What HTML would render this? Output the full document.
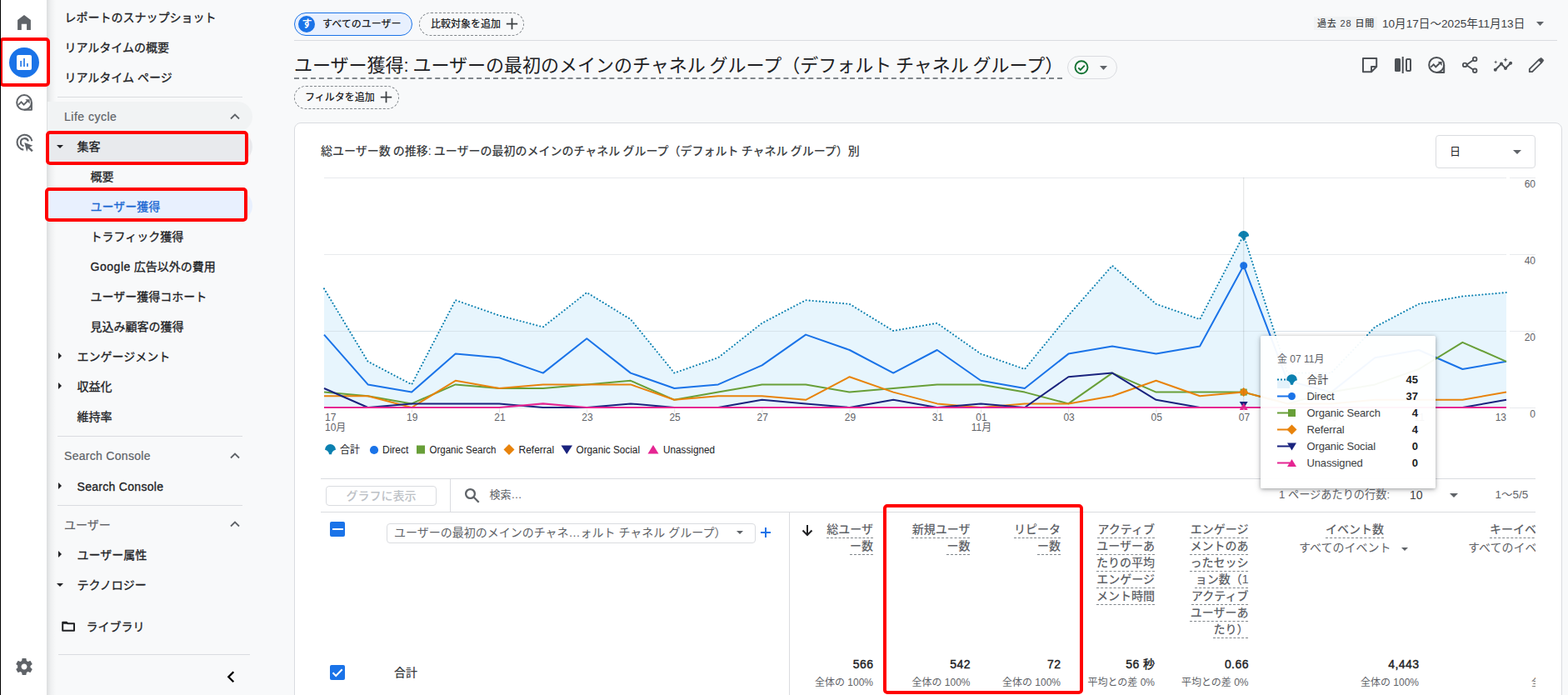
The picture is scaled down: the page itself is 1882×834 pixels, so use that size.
<!DOCTYPE html>
<html lang="ja">
<head>
<meta charset="utf-8">
<title>ユーザー獲得</title>
<style>
*{box-sizing:border-box;margin:0;padding:0}
html,body{width:1882px;height:834px;overflow:hidden;background:#f8f9fa}
body{position:relative;font-family:"Liberation Sans","Noto Sans CJK JP",sans-serif;color:#202124;font-size:14px}
.abs{position:absolute}
.t{position:absolute;white-space:nowrap;line-height:1}
svg{position:absolute;overflow:visible}
/* rail */
#edge{left:0;top:0;width:1px;height:834px;background:#000}
#rail{left:1px;top:0;width:55px;height:834px;background:#fff}
#railshadow{left:56px;top:0;width:11px;height:834px;background:linear-gradient(90deg,rgba(60,64,67,.15),rgba(60,64,67,.05) 45%,rgba(60,64,67,0))}
/* sidebar */
.nav{font-size:14px;color:#202124;font-weight:400;-webkit-text-stroke:.3px #202124;transform:translate(-.5px,.5px)}
.sec{font-size:14px;color:#5f6368;font-weight:400;-webkit-text-stroke:.22px #5f6368}
.hr{position:absolute;height:1px;background:#dadce0}
.redbox{position:absolute;border:4px solid #f00;border-radius:5px}
/* main */
.chip{position:absolute;border-radius:16px;font-size:12.5px;color:#202124}
.gl{stroke:#e8eaed;stroke-width:1}
.ax{font-size:12px;fill:#5f6368;font-family:"Liberation Sans","Noto Sans CJK JP",sans-serif}
.lg{font-size:12px;fill:#202124;font-family:"Liberation Sans","Noto Sans CJK JP",sans-serif}
.th{position:absolute;font-size:14px;line-height:20px;color:#5f6368;text-align:right;white-space:nowrap;font-weight:500}
.th span{text-decoration:underline dashed #80868b 1px;text-underline-offset:4.600px}
.tv{position:absolute;font-size:14px;font-weight:400;-webkit-text-stroke:.42px #202124;letter-spacing:.45px;margin-left:.45px;color:#202124;text-align:right;white-space:nowrap;line-height:1}
.ts{position:absolute;font-size:12px;color:#5f6368;text-align:right;white-space:nowrap;line-height:1}
</style>
</head>
<body>
<!-- ICON RAIL -->
<div class="abs" id="rail"></div>
<div class="abs" id="railshadow"></div>

<!-- rail icons -->
<svg style="left:0;top:0" width="60" height="50" viewBox="0 0 60 50"><path d="M21.100 35.900V24.100L29 18l7.900 6.100V35.900h-4.800v-7.200h-6.300v7.200z" fill="#5f6368"/></svg>
<div class="abs" style="left:11px;top:57px;width:36px;height:36px;border-radius:50%;background:#1a73e8"></div>
<svg style="left:20px;top:66px" width="18" height="18" viewBox="0 0 18 18"><rect x="0" y="0" width="18" height="18" rx="2" fill="#fff"/><rect x="4.300" y="7" width="1.600" height="7" fill="#1a73e8"/><rect x="8.200" y="4" width="1.600" height="10" fill="#1a73e8"/><rect x="12.100" y="10" width="1.600" height="4" fill="#1a73e8"/></svg>
<svg style="left:0;top:0" width="60" height="200" viewBox="0 0 60 200" fill="none" stroke="#5f6368" stroke-width="2"><circle cx="29.050" cy="122.950" r="8.850"/><path d="M37.900 122.950v8.850h-8.850" stroke-linejoin="round"/><path d="M22.100 125.800l3.400-3.400 3.100 3.200 4.400-4.300" stroke-width="1.900"/><path d="M30.400 119.300h5.200v5.200z" fill="#5f6368" stroke="none"/></svg>
<svg style="left:0;top:0" width="60" height="200" viewBox="0 0 60 200" fill="none" stroke="#5f6368" stroke-width="2.100"><path d="M38.400 169.200A9 9 0 1 0 28.300 179.700"/><path d="M33.900 169.600A4.600 4.600 0 1 0 28.600 175.300"/><path d="M29.300 170.900l10 3.800-3.800 1.700 4.200 4.200-1.700 1.700-4.200-4.200-1.700 3.800z" fill="#5f6368" stroke="none"/></svg>
<svg style="left:17px;top:787.800px" width="24" height="24" viewBox="0 0 24 24"><path fill="#5f6368" d="M19.430 12.980c.040-.32.070-.640.070-.980s-.030-.660-.070-.980l2.110-1.650c.190-.15.240-.42.120-.640l-2-3.460c-.12-.22-.39-.3-.61-.22l-2.490 1c-.52-.4-1.080-.73-1.690-.98l-.38-2.650C14.460 2.180 14.250 2 14 2h-4c-.25 0-.46.180-.49.420l-.38 2.650c-.61.250-1.170.59-1.690.98l-2.490-1c-.23-.09-.49 0-.61.220l-2 3.460c-.13.220-.07.490.12.640l2.110 1.650c-.4.320-.7.650-.7.980s.3.660.7.980l-2.110 1.650c-.19.150-.24.420-.12.640l2 3.460c.12.220.39.300.61.220l2.490-1c.52.400 1.080.73 1.690.98l.38 2.650c.3.240.24.420.49.420h4c.25 0 .46-.18.490-.42l.38-2.650c.61-.25 1.170-.59 1.690-.98l2.490 1c.23.090.49 0 .61-.22l2-3.460c.12-.22.070-.49-.12-.640l-2.110-1.650zM12 15.500c-1.930 0-3.500-1.570-3.500-3.500s1.570-3.500 3.500-3.500 3.500 1.570 3.500 3.500-1.570 3.500-3.500 3.500z"/></svg>
<div class="redbox" style="left:-1px;top:45px;width:61px;height:59px"></div>
<div class="abs" id="edge"></div>

<!-- SIDEBAR -->
<div id="sidebar">
<div class="t nav" style="left:78px;top:13px">レポートのスナップショット</div>
<div class="t nav" style="left:78px;top:49px">リアルタイムの概要</div>
<div class="t nav" style="left:78px;top:85px">リアルタイム ページ</div>
<div class="hr" style="left:69px;top:116px;width:222px"></div>
<div class="abs" style="left:57px;top:122px;width:246px;height:36px;background:#f1f3f4;border-radius:0 18px 18px 0"></div>
<div class="t sec" style="left:77px;top:132.700px;letter-spacing:.5px">Life cycle</div>
<svg style="left:276px;top:136px" width="12" height="8" viewBox="0 0 12 8"><path d="M1 6.500l5-5 5 5" fill="none" stroke="#5f6368" stroke-width="1.800"/></svg>
<div class="abs" style="left:57px;top:158px;width:246px;height:36px;background:#e8eaed;border-radius:0 18px 18px 0"></div>
<svg style="left:68px;top:174px" width="8" height="4" viewBox="0 0 8 4"><path d="M0 0h8L4 4z" fill="#202124"/></svg>
<div class="t nav" style="left:93px;top:168px">集客</div>
<div class="t nav" style="left:109px;top:204px">概要</div>
<div class="abs" style="left:57px;top:229px;width:246px;height:36px;background:#e8f0fe;border-radius:0 18px 18px 0"></div>
<div class="t nav" style="left:109px;top:240px;color:#1967d2;-webkit-text-stroke-color:#1967d2">ユーザー獲得</div>
<div class="t nav" style="left:109px;top:276px">トラフィック獲得</div>
<div class="t nav" style="left:109px;top:312px"><span style="letter-spacing:.55px">Google</span> 広告以外の費用</div>
<div class="t nav" style="left:109px;top:348px">ユーザー獲得コホート</div>
<div class="t nav" style="left:109px;top:384px">見込み顧客の獲得</div>
<svg style="left:70px;top:423px" width="4" height="8" viewBox="0 0 4 8"><path d="M0 0v8l4-4z" fill="#202124"/></svg>
<div class="t nav" style="left:93px;top:420px">エンゲージメント</div>
<svg style="left:70px;top:459px" width="4" height="8" viewBox="0 0 4 8"><path d="M0 0v8l4-4z" fill="#202124"/></svg>
<div class="t nav" style="left:93px;top:456px">収益化</div>
<div class="t nav" style="left:93px;top:492px">維持率</div>
<div class="hr" style="left:69px;top:523px;width:222px"></div>
<div class="t sec" style="left:77px;top:540.300px;letter-spacing:.3px">Search Console</div>
<svg style="left:276px;top:543px" width="12" height="8" viewBox="0 0 12 8"><path d="M1 6.500l5-5 5 5" fill="none" stroke="#5f6368" stroke-width="1.800"/></svg>
<svg style="left:70px;top:579px" width="4" height="8" viewBox="0 0 4 8"><path d="M0 0v8l4-4z" fill="#202124"/></svg>
<div class="t nav" style="left:93px;top:576px;letter-spacing:.3px">Search Console</div>
<div class="hr" style="left:69px;top:606px;width:222px"></div>
<div class="t sec" style="left:77px;top:622.800px">ユーザー</div>
<svg style="left:276px;top:625px" width="12" height="8" viewBox="0 0 12 8"><path d="M1 6.500l5-5 5 5" fill="none" stroke="#5f6368" stroke-width="1.800"/></svg>
<svg style="left:70px;top:661px" width="4" height="8" viewBox="0 0 4 8"><path d="M0 0v8l4-4z" fill="#202124"/></svg>
<div class="t nav" style="left:93px;top:658px">ユーザー属性</div>
<svg style="left:68px;top:700px" width="8" height="4" viewBox="0 0 8 4"><path d="M0 0h8L4 4z" fill="#202124"/></svg>
<div class="t nav" style="left:93px;top:694px">テクノロジー</div>
<svg style="left:74px;top:745px" width="17" height="14" viewBox="0 0 17 14"><path d="M1.200 1.800h4.600l1.500 1.500H15V11.800H1.200z" fill="none" stroke="#202124" stroke-width="2" stroke-linejoin="round"/><path d="M1 2.800H7" stroke="#202124" stroke-width="2"/></svg>
<div class="t nav" style="left:104px;top:744px">ライブラリ</div>
<div class="hr" style="left:70px;top:785px;width:230px"></div>
<svg style="left:272px;top:805px" width="10" height="14" viewBox="0 0 10 14"><path d="M8.300 1.200L2.300 7.200l6 6" fill="none" stroke="#000" stroke-width="2.300"/></svg>
<div class="redbox" style="left:55px;top:157px;width:243px;height:41px"></div>
<div class="redbox" style="left:54px;top:225px;width:243px;height:41px"></div>
</div>

<!-- MAIN -->
<div id="main">
<!-- header chips -->
<div class="chip" style="left:353px;top:15px;width:142px;height:28px;background:#e8f0fe;border:1.500px solid #1a73e8"></div>
<div class="abs" style="left:358px;top:18.500px;width:20px;height:20px;border-radius:50%;background:#1a73e8"></div>
<div class="t" style="left:362.500px;top:23px;font-size:12px;color:#fff;font-weight:700">す</div>
<div class="t" style="left:387px;top:23px;font-size:12px;color:#202124;font-weight:500">すべてのユーザー</div>
<div class="chip" style="left:503px;top:15px;width:126px;height:28px;border:1px dashed #80868b"></div>
<div class="t" style="left:517px;top:23px;font-size:12px;color:#202124;font-weight:500">比較対象を追加</div>
<svg style="left:607px;top:21px" width="15" height="15" viewBox="0 0 15 15"><path d="M7.500 0.800v13.400M0.800 7.500h13.400" stroke="#3c4043" stroke-width="1.750"/></svg>
<div class="hr" style="left:353px;top:48px;width:1516px"></div>
<!-- date range -->
<div class="abs" style="left:1577px;top:20px;width:76px;height:16px;background:#f1f3f4"></div>
<div class="t" style="left:1581px;top:22.500px;font-size:11px;color:#3c4043;font-weight:500;letter-spacing:.85px">過去 28 日間</div>
<div class="t" style="left:1659px;top:21.500px;font-size:13.600px;color:#3c4043;font-weight:400">10月17日～2025年11月13日</div>
<svg style="left:1844px;top:26px" width="9" height="5" viewBox="0 0 9 5"><path d="M0 0h9L4.500 5z" fill="#5f6368"/></svg>
<!-- title -->
<div class="t" id="title" style="left:353px;top:67.500px;font-size:22px;color:#202124;font-weight:400;word-spacing:-1.350px">ユーザー獲得: ユーザーの最初のメインのチャネル グループ（デフォルト チャネル グループ）</div>
<div class="abs" style="left:353px;top:93px;width:922px;height:0;border-top:2px dashed #80868b"></div>
<div class="abs" style="left:1281px;top:67px;width:60px;height:28px;border:1px solid #dadce0;border-radius:14px"></div>
<svg style="left:1289px;top:72px" width="18" height="18" viewBox="0 0 18 18" fill="none" stroke="#137333" stroke-width="1.900"><circle cx="9" cy="8.800" r="7.500"/><path d="M5.300 9.300l2.500 2.500 5-5.200"/></svg>
<svg style="left:1319.500px;top:79px" width="9" height="5" viewBox="0 0 9 5"><path d="M0 0h9L4.500 5z" fill="#5f6368"/></svg>
<!-- toolbar icons -->
<svg style="left:0;top:0" width="1882" height="100" viewBox="0 0 1882 100" fill="none" stroke="#4d5156" stroke-width="2">
<path d="M1636 70h16.200v10l-6.200 6.200h-10z" stroke-linejoin="round"/><path d="M1652.200 80h-6.200v6.200" stroke-linejoin="round"/>
<rect x="1674" y="70" width="7" height="16" rx="1.500" fill="#4d5156" stroke="none"/><rect x="1682.700" y="68" width="2" height="20" fill="#4d5156" stroke="none"/><rect x="1688" y="71" width="5" height="14" rx="1"/>
<circle cx="1724.200" cy="77.900" r="9"/><path d="M1733.200 77.900v9h-9" stroke-linejoin="round"/><path d="M1717.300 80.600l3.400-3.300 2.600 3 4.800-4.600" stroke-width="1.900"/><path d="M1725.600 73.900h5v5z" fill="#4d5156" stroke="none"/>
<path d="M1768 72.200l-8 5.700 8 5.700" stroke-width="1.900"/><circle cx="1770.200" cy="71" r="2.300" fill="#f8f9fa" stroke-width="1.800"/><circle cx="1758.200" cy="77.900" r="2.300" fill="#f8f9fa" stroke-width="1.800"/><circle cx="1770.200" cy="84.800" r="2.300" fill="#f8f9fa" stroke-width="1.800"/>
<path d="M1794.800 83.800l7.200-7.200 5 5.300 6.100-6.200"/><circle cx="1794.800" cy="83.800" r="2" fill="#4d5156" stroke="none"/><circle cx="1802" cy="76.600" r="2" fill="#4d5156" stroke="none"/><circle cx="1807" cy="81.900" r="2" fill="#4d5156" stroke="none"/><circle cx="1813.100" cy="75.700" r="2" fill="#4d5156" stroke="none"/>
<path d="M1795.200 72.300l.6 1.600 1.600.6-1.600.6-.6 1.600-.6-1.600-1.600-.6 1.600-.6zM1807 69l.8 1.900 1.900.8-1.900.8-.8 1.900-.8-1.900-1.900-.8 1.900-.8z" fill="#4d5156" stroke="none"/>
<path d="M1835.800 86.200v-3.300l11.600-11.600 3.300 3.300-11.600 11.600z" stroke-linejoin="round" stroke-width="1.800"/><path d="M1846.600 72.100l2.300-2.300a1 1 0 0 1 1.400 0l2 2a1 1 0 0 1 0 1.400l-2.300 2.300z" fill="#4d5156" stroke-width="1"/>
</svg>
<!-- filter chip -->
<div class="chip" style="left:353px;top:103px;width:126px;height:28px;border:1px dashed #80868b"></div>
<div class="t" style="left:366px;top:111px;font-size:12px;color:#202124;font-weight:500">フィルタを追加</div>
<svg style="left:456px;top:109px" width="15" height="15" viewBox="0 0 15 15"><path d="M7.500 0.800v13.400M0.800 7.500h13.400" stroke="#3c4043" stroke-width="1.750"/></svg>
<!-- card -->
<div class="abs" id="card" style="left:353px;top:147px;width:1522px;height:700px;background:#fff;border:1px solid #dadce0;border-radius:8px"></div>
<div class="t" style="left:385px;top:174px;font-size:14px;color:#3c4043;font-weight:500;word-spacing:-.8px">総ユーザー数 の推移: ユーザーの最初のメインのチャネル グループ（デフォルト チャネル グループ）別</div>
<div class="abs" style="left:1723px;top:162px;width:120px;height:40px;border:1px solid #dadce0;border-radius:4px;background:#fff"></div>
<div class="t" style="left:1740px;top:175px;font-size:13px;color:#202124">日</div>
<svg style="left:1816px;top:180px" width="10" height="5" viewBox="0 0 10 5"><path d="M0 0h10L5 5z" fill="#5f6368"/></svg>
<!--CHART-->
<svg id="chart" style="left:0;top:0" width="1882" height="834" viewBox="0 0 1882 834">
<path class="gl" d="M389 213.5H1808M1812 213.5H1843"/>
<path class="gl" d="M389 305.5H1808M1812 305.5H1843"/>
<path class="gl" d="M389 397.5H1808M1812 397.5H1843"/>
<path class="gl" d="M389 489.5H1808M1812 489.5H1843"/>
<polygon points="389.0,489.0 389.0,346.4 441.6,433.8 494.1,461.4 546.7,360.2 599.2,378.6 651.8,392.4 704.3,351.0 756.9,383.2 809.4,447.6 862.0,429.2 914.6,387.8 967.1,360.2 1019.7,364.8 1072.2,397.0 1124.8,387.8 1177.3,424.6 1229.9,443.0 1282.4,378.6 1335.0,318.8 1387.6,364.8 1440.1,383.2 1492.7,282.0 1545.2,447.6 1597.8,447.6 1650.3,392.4 1702.9,364.8 1755.4,355.6 1808.0,351.0 1808.0,489.0" fill="#e3f3fd" fill-opacity=".85"/>
<path d="M389 397.5H1808" stroke="#d5e0e8" stroke-width="1" opacity=".8"/>
<polyline points="389.0,346.4 441.6,433.8 494.1,461.4 546.7,360.2 599.2,378.6 651.8,392.4 704.3,351.0 756.9,383.2 809.4,447.6 862.0,429.2 914.6,387.8 967.1,360.2 1019.7,364.8 1072.2,397.0 1124.8,387.8 1177.3,424.6 1229.9,443.0 1282.4,378.6 1335.0,318.8 1387.6,364.8 1440.1,383.2 1492.7,282.0 1545.2,447.6 1597.8,447.6 1650.3,392.4 1702.9,364.8 1755.4,355.6 1808.0,351.0" fill="none" stroke="#0b80b0" stroke-width="2.100" stroke-linecap="round" stroke-dasharray="0.010 4.050"/>
<polyline points="389.0,401.6 441.6,461.4 494.1,470.6 546.7,424.6 599.2,429.2 651.8,447.6 704.3,406.2 756.9,447.6 809.4,466.0 862.0,461.4 914.6,438.4 967.1,401.6 1019.7,420.0 1072.2,447.6 1124.8,420.0 1177.3,456.8 1229.9,466.0 1282.4,424.6 1335.0,415.4 1387.6,424.6 1440.1,415.4 1492.7,318.8 1545.2,456.8 1597.8,470.6 1650.3,429.2 1702.9,420.0 1755.4,443.0 1808.0,433.8" fill="none" stroke="#1a73e8" stroke-width="2" stroke-linejoin="round"/>
<polyline points="389.0,470.6 441.6,475.2 494.1,484.4 546.7,461.4 599.2,466.0 651.8,466.0 704.3,461.4 756.9,456.8 809.4,479.8 862.0,470.6 914.6,461.4 967.1,461.4 1019.7,470.6 1072.2,466.0 1124.8,461.4 1177.3,461.4 1229.9,470.6 1282.4,484.4 1335.0,447.6 1387.6,470.6 1440.1,470.6 1492.7,470.6 1545.2,484.4 1597.8,470.6 1650.3,461.4 1702.9,443.0 1755.4,410.8 1808.0,433.8" fill="none" stroke="#689f38" stroke-width="2" stroke-linejoin="round"/>
<polyline points="389.0,475.2 441.6,475.2 494.1,489.0 546.7,456.8 599.2,466.0 651.8,461.4 704.3,461.4 756.9,461.4 809.4,479.8 862.0,475.2 914.6,475.2 967.1,479.8 1019.7,452.2 1072.2,470.6 1124.8,484.4 1177.3,489.0 1229.9,484.4 1282.4,484.4 1335.0,475.2 1387.6,456.8 1440.1,475.2 1492.7,470.6 1545.2,484.4 1597.8,484.4 1650.3,479.8 1702.9,479.8 1755.4,479.8 1808.0,470.6" fill="none" stroke="#e8830c" stroke-width="2" stroke-linejoin="round"/>
<polyline points="389.0,466.0 441.6,489.0 494.1,484.4 546.7,484.4 599.2,484.4 651.8,489.0 704.3,489.0 756.9,484.4 809.4,489.0 862.0,489.0 914.6,479.8 967.1,484.4 1019.7,489.0 1072.2,479.8 1124.8,489.0 1177.3,484.4 1229.9,489.0 1282.4,452.2 1335.0,447.6 1387.6,479.8 1440.1,489.0 1492.7,489.0 1545.2,489.0 1597.8,489.0 1650.3,489.0 1702.9,489.0 1755.4,489.0 1808.0,479.8" fill="none" stroke="#1a237e" stroke-width="2" stroke-linejoin="round"/>
<polyline points="389.0,489.0 441.6,489.0 494.1,489.0 546.7,489.0 599.2,489.0 651.8,484.4 704.3,489.0 756.9,489.0 809.4,489.0 862.0,489.0 914.6,489.0 967.1,489.0 1019.7,489.0 1072.2,489.0 1124.8,489.0 1177.3,489.0 1229.9,489.0 1282.4,489.0 1335.0,489.0 1387.6,489.0 1440.1,489.0 1492.7,489.0 1545.2,489.0 1597.8,489.0 1650.3,489.0 1702.9,489.0 1755.4,489.0 1808.0,489.0" fill="none" stroke="#e52592" stroke-width="2.200"/>
<path d="M1486.2 283.3A6.500 6.2 0 0 1 1499.2 283.3Q1493.7 284.6 1493.4 288.90000000000003H1492.0Q1491.7 284.6 1486.2 283.3Z" fill="#0b80b0"/>
<circle cx="1492.7" cy="318.8" r="4.500" fill="#1a73e8"/>
<rect x="1488.7" y="466.6" width="8" height="8" fill="#689f38"/>
<path d="M1492.7 465.1l5.500 5.500-5.500 5.500-5.500-5.500z" fill="#e8830c"/>
<path d="M1487.7 482.0h10l-5 8z" fill="#1a237e"/>
<path d="M1487.7 492.0h10l-5-8.500z" fill="#e52592"/>
<path d="M1492.7 213V489" stroke="rgba(60,64,67,.14)" stroke-width="1.100"/>
<text class="ax" x="1843" y="225" text-anchor="end">60</text>
<text class="ax" x="1843" y="317" text-anchor="end">40</text>
<text class="ax" x="1843" y="409" text-anchor="end">20</text>
<text class="ax" x="1843" y="501" text-anchor="end">0</text>
<text class="ax" x="390" y="505">17</text>
<path d="M494.40000000000003 490.500V495" stroke="#e0e0e0" stroke-width="1"/>
<text class="ax" x="494.8" y="505" text-anchor="middle">19</text>
<path d="M599.5 490.500V495" stroke="#e0e0e0" stroke-width="1"/>
<text class="ax" x="599.9000000000001" y="505" text-anchor="middle">21</text>
<path d="M704.5999999999999 490.500V495" stroke="#e0e0e0" stroke-width="1"/>
<text class="ax" x="705.0" y="505" text-anchor="middle">23</text>
<path d="M809.6999999999999 490.500V495" stroke="#e0e0e0" stroke-width="1"/>
<text class="ax" x="810.1" y="505" text-anchor="middle">25</text>
<path d="M914.9 490.500V495" stroke="#e0e0e0" stroke-width="1"/>
<text class="ax" x="915.3000000000001" y="505" text-anchor="middle">27</text>
<path d="M1020.0 490.500V495" stroke="#e0e0e0" stroke-width="1"/>
<text class="ax" x="1020.4000000000001" y="505" text-anchor="middle">29</text>
<path d="M1125.1 490.500V495" stroke="#e0e0e0" stroke-width="1"/>
<text class="ax" x="1125.5" y="505" text-anchor="middle">31</text>
<path d="M1177.6 490.500V495" stroke="#e0e0e0" stroke-width="1"/>
<text class="ax" x="1178.0" y="505" text-anchor="middle">01</text>
<path d="M1282.7 490.500V495" stroke="#e0e0e0" stroke-width="1"/>
<text class="ax" x="1283.1000000000001" y="505" text-anchor="middle">03</text>
<path d="M1387.8999999999999 490.500V495" stroke="#e0e0e0" stroke-width="1"/>
<text class="ax" x="1388.3" y="505" text-anchor="middle">05</text>
<path d="M1493.0 490.500V495" stroke="#e0e0e0" stroke-width="1"/>
<text class="ax" x="1493.4" y="505" text-anchor="middle">07</text>
<path d="M1598.1 490.500V495" stroke="#e0e0e0" stroke-width="1"/>
<text class="ax" x="1598.5" y="505" text-anchor="middle">09</text>
<path d="M1703.2 490.500V495" stroke="#e0e0e0" stroke-width="1"/>
<text class="ax" x="1703.6000000000001" y="505" text-anchor="middle">11</text>
<text class="ax" x="1808" y="505" text-anchor="end">13</text>
<text class="ax" x="390" y="517">10月</text>
<text class="ax" x="1178.0" y="517" text-anchor="middle">11月</text>
<path d="M390.0 539.8A6.500 6.9 0 0 1 403.0 539.8Q398.3 541.0999999999999 398.0 545.3H395.0Q394.7 541.0999999999999 390.0 539.8Z" fill="#0b80b0"/>
<text class="lg" x="408" y="544">合計</text>
<circle cx="449" cy="540.0" r="5.100" fill="#1a73e8"/>
<text class="lg" x="459" y="544">Direct</text>
<rect x="500" y="534.5" width="10" height="10" fill="#689f38"/>
<text class="lg" x="515.500" y="544" textLength="80" lengthAdjust="spacingAndGlyphs">Organic Search</text>
<path d="M611 533.0l6.500 6.500-6.500 6.500-6.500-6.500z" fill="#e8830c"/>
<text class="lg" x="622.500" y="544">Referral</text>
<path d="M673.500 534.5h13.500l-6.750 10.500z" fill="#1a237e"/>
<text class="lg" x="691.500" y="544" textLength="76.500" lengthAdjust="spacingAndGlyphs">Organic Social</text>
<path d="M777.500 544.5h13l-6.500-10.500z" fill="#e52592"/>
<text class="lg" x="796" y="544" textLength="62" lengthAdjust="spacingAndGlyphs">Unassigned</text>
</svg>
<!--/CHART-->
<!--TABLE-->
<div class="hr" style="left:385px;top:574px;width:1458px"></div>
<div class="hr" style="left:385px;top:614px;width:1458px"></div>
<div class="abs" style="left:540px;top:574px;width:1px;height:40px;background:#dadce0"></div>
<div class="abs" style="left:391px;top:583px;width:133px;height:24px;border:1px solid #dadce0;border-radius:4px"></div>
<div class="t" style="left:391px;width:133px;text-align:center;top:588px;font-size:14px;color:#bdc1c6;font-weight:500">グラフに表示</div>
<svg style="left:557px;top:585px" width="19" height="19" viewBox="0 0 19 19" fill="none" stroke="#5f6368" stroke-width="2.300"><circle cx="7.500" cy="7.500" r="5.400"/><path d="M11.500 11.500l6.200 6.200"/></svg>
<div class="t" style="left:587.500px;top:587px;font-size:13px;color:#5f6368;font-weight:400">検索…</div>
<div class="t" style="left:1535px;top:587px;font-size:13.200px;color:#5f6368">1 ページあたりの行数:</div>
<div class="t" style="left:1692px;top:587px;font-size:14px;color:#3c4043">10</div>
<svg style="left:1740px;top:592px" width="10" height="5" viewBox="0 0 10 5"><path d="M0 0h10L5 5z" fill="#5f6368"/></svg>
<div class="t" style="left:1794.500px;top:587px;font-size:13.500px;color:#5f6368">1～5/5</div>
<div class="abs" style="left:396px;top:626px;width:18px;height:18px;border-radius:2px;background:#1a73e8"></div><div class="abs" style="left:398.500px;top:634px;width:13px;height:2px;background:#fff"></div>
<div class="abs" style="left:464px;top:628px;width:443px;height:24px;border:1px solid #dadce0;border-radius:4px"></div>
<div class="t" style="left:473px;top:631.500px;font-size:14px;color:#5f6368;font-weight:400">ユーザーの最初のメインのチャネ…ォルト チャネル グループ）</div>
<svg style="left:884px;top:637px" width="8" height="4" viewBox="0 0 8 4"><path d="M0 0h8L4 4z" fill="#5f6368"/></svg>
<svg style="left:913px;top:633px" width="12" height="12" viewBox="0 0 12 12"><path d="M6 0v12M0 6h12" stroke="#1a73e8" stroke-width="2"/></svg>
<div class="abs" style="left:947px;top:614px;width:1px;height:230px;background:#dadce0"></div>
<svg style="left:962px;top:629px" width="14" height="15" viewBox="0 0 14 15" fill="none" stroke="#202124" stroke-width="2"><path d="M7 1v12M1.500 7.500L7 13l5.500-5.500"/></svg>
<div class="abs" style="left:948px;top:615px;width:895px;height:219px;overflow:hidden">
<div class="th" style="left:-100px;width:200px;top:10.100000000000023px"><span>総ユーザ</span><br><span>ー数</span></div>
<div class="th" style="left:16.5px;width:200px;top:10.100000000000023px"><span>新規ユーザ</span><br><span>ー数</span></div>
<div class="th" style="left:125px;width:200px;top:10.100000000000023px"><span>リピータ</span><br><span>ー数</span></div>
<div class="th" style="left:238px;width:200px;top:10.100000000000023px"><span>アクティブ</span><br><span>ユーザーあ</span><br><span>たりの平均</span><br><span>エンゲージ</span><br><span>メント時間</span></div>
<div class="th" style="left:350.5px;width:200px;top:10.100000000000023px"><span>エンゲージ</span><br><span>メントのあ</span><br><span>ったセッシ</span><br><span>ョン数（1</span><br><span>アクティブ</span><br><span>ユーザーあ</span><br><span>たり）</span></div>
<div class="th" style="left:578px;width:200px;text-align:center;top:10.100px"><span>イベント数</span></div>
<div class="t" style="left:611px;top:35px;font-size:14px;color:#5f6368">すべてのイベント</div>
<svg style="left:734px;top:42px" width="8" height="4" viewBox="0 0 8 4"><path d="M0 0h8L4 4z" fill="#5f6368"/></svg>
<div class="th" style="left:840px;text-align:left;top:10.100px"><span>キーイベント</span></div>
<div class="t" style="left:814px;top:35px;font-size:14px;color:#5f6368">すべてのイベント</div>
<div class="tv" style="left:-50px;width:150px;top:175px">566</div><div class="ts" style="left:-50px;width:150px;top:197.5px">全体の 100%</div>
<div class="tv" style="left:66.5px;width:150px;top:175px">542</div><div class="ts" style="left:66.5px;width:150px;top:197.5px">全体の 100%</div>
<div class="tv" style="left:175px;width:150px;top:175px">72</div><div class="ts" style="left:175px;width:150px;top:197.5px">全体の 100%</div>
<div class="tv" style="left:288px;width:150px;top:175px">56 秒</div><div class="ts" style="left:288px;width:150px;top:197.5px">平均との差 0%</div>
<div class="tv" style="left:400.5px;width:150px;top:175px">0.66</div><div class="ts" style="left:400.5px;width:150px;top:197.5px">平均との差 0%</div>
<div class="tv" style="left:605px;width:150px;top:175px">4,443</div><div class="ts" style="left:605px;width:150px;top:197.5px">全体の 100%</div>
<div class="ts" style="left:890px;text-align:left;top:197.5px">全体の 100%</div>
</div>
<div class="abs" style="left:396px;top:798px;width:18px;height:18px;border-radius:2px;background:#1a73e8"></div>
<svg style="left:396px;top:798px" width="18" height="18" viewBox="0 0 18 18"><path d="M3.500 9.300l3.700 3.700 7.500-7.800" fill="none" stroke="#fff" stroke-width="2"/></svg>
<div class="t" style="left:473px;top:800px;font-size:14px;color:#3c4043;font-weight:500">合計</div>
<div class="redbox" style="left:1060px;top:605px;width:240px;height:228px"></div>
<div class="abs" id="tip" style="left:1512.500px;top:403px;width:210px;height:183px;background:rgba(255,255,255,.95);border-radius:2px;box-shadow:0 1px 4px rgba(60,64,67,.42),0 2px 8px rgba(60,64,67,.16)"></div>
<div class="t" style="left:1533px;top:424.500px;font-size:12px;color:#5f6368">金 07 11月</div>
<div class="t" style="left:1568.500px;top:448.5px;font-size:13px;color:#3c4043;letter-spacing:-.15px">合計</div>
<div class="t" style="left:1642px;width:60px;text-align:right;top:448.5px;font-size:13px;font-weight:700;color:#202124">45</div>
<div class="t" style="left:1568.500px;top:468.5px;font-size:13px;color:#3c4043;letter-spacing:-.15px">Direct</div>
<div class="t" style="left:1642px;width:60px;text-align:right;top:468.5px;font-size:13px;font-weight:700;color:#202124">37</div>
<div class="t" style="left:1568.500px;top:488.5px;font-size:13px;color:#3c4043;letter-spacing:-.15px">Organic Search</div>
<div class="t" style="left:1642px;width:60px;text-align:right;top:488.5px;font-size:13px;font-weight:700;color:#202124">4</div>
<div class="t" style="left:1568.500px;top:508.5px;font-size:13px;color:#3c4043;letter-spacing:-.15px">Referral</div>
<div class="t" style="left:1642px;width:60px;text-align:right;top:508.5px;font-size:13px;font-weight:700;color:#202124">4</div>
<div class="t" style="left:1568.500px;top:528.5px;font-size:13px;color:#3c4043;letter-spacing:-.15px">Organic Social</div>
<div class="t" style="left:1642px;width:60px;text-align:right;top:528.5px;font-size:13px;font-weight:700;color:#202124">0</div>
<div class="t" style="left:1568.500px;top:548.5px;font-size:13px;color:#3c4043;letter-spacing:-.15px">Unassigned</div>
<div class="t" style="left:1642px;width:60px;text-align:right;top:548.5px;font-size:13px;font-weight:700;color:#202124">0</div>
<svg style="left:0;top:0" width="1882" height="834" viewBox="0 0 1882 834">
<rect x="1533" y="456.5" width="15" height="9.500" fill="#e3f2fb"/>
<path d="M1533 455.5H1546" stroke="#0b80b0" stroke-width="2" stroke-dasharray="2 2"/>
<path d="M1544.0 456.2A6.500 6.900 0 0 1 1557.0 456.2Q1552.3 457.5 1552.0 461.7H1549.0Q1548.7 457.5 1544.0 456.2Z" fill="#0b80b0"/>
<path d="M1533 475.5H1548" stroke="#1a73e8" stroke-width="2"/>
<circle cx="1550.5" cy="475.5" r="4.500" fill="#1a73e8"/>
<path d="M1533 495.5H1548" stroke="#689f38" stroke-width="2"/>
<rect x="1546.0" y="491.0" width="9" height="9" fill="#689f38"/>
<path d="M1533 515.5H1548" stroke="#e8830c" stroke-width="2"/>
<path d="M1550.5 509.5l6 6-6 6-6-6z" fill="#e8830c"/>
<path d="M1533 535.5H1548" stroke="#1a237e" stroke-width="2"/>
<path d="M1545.0 531.5h11l-5.500 9z" fill="#1a237e"/>
<path d="M1533 555.5H1548" stroke="#e52592" stroke-width="2"/>
<path d="M1545.0 560.0h11l-5.500-9z" fill="#e52592"/>
</svg>
<!--/TABLE-->
</div>
</body>
</html>
